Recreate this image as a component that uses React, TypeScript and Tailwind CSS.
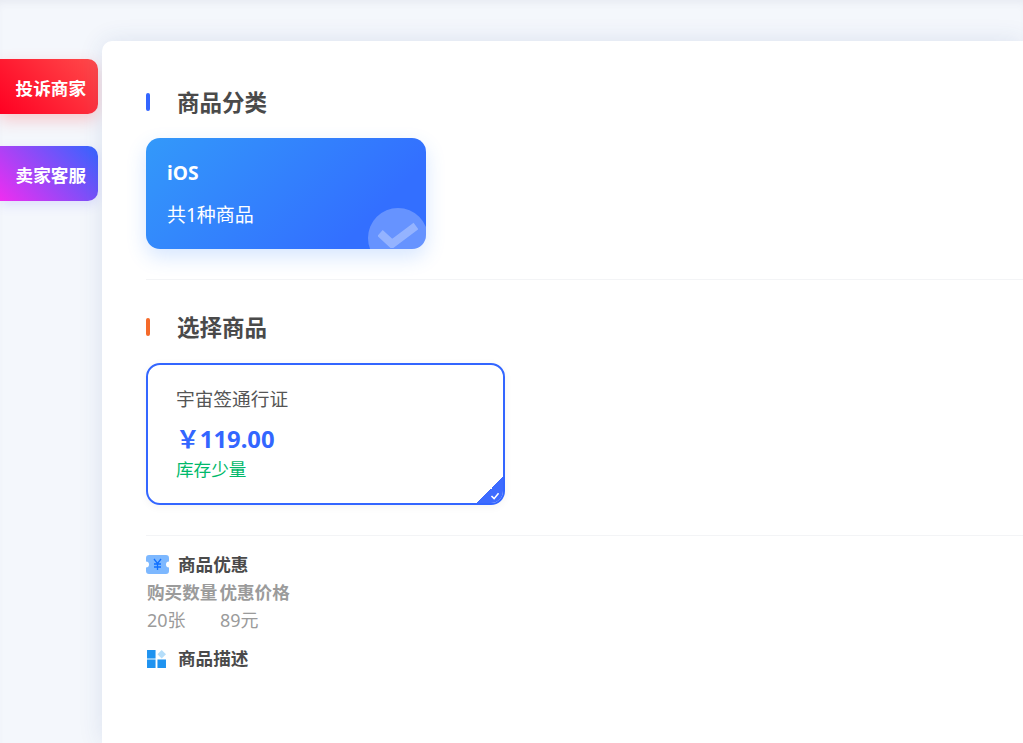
import React from 'react';

const font = 'font-["Noto_Sans","Noto_Sans_CJK_SC",sans-serif]';

// Left side floating buttons
const SideButton = ({ label, className }: { label: string; className: string }) => (
  <div className={`flex h-[55px] w-[98px] items-center justify-end rounded-r-[10px] pt-[3px] pr-3 text-[17.6px] font-bold text-white ${className}`}>
    {label}
  </div>
);

const SectionTitle = ({ label, barColor }: { label: string; barColor: string }) => (
  <div className="flex h-[32px] items-center">
    <span className={`h-[18px] w-1 rounded-full ${barColor}`} />
    <h2 className="mt-[1px] ml-[27px] text-[22.5px] leading-[32px] font-bold text-[#4a4a4a]">{label}</h2>
  </div>
);

const TicketIcon = () => (
  <svg width="23" height="19" viewBox="0 0 23 19">
    <path d="M3 0h17a3 3 0 0 1 3 3v3.500a3 3 0 0 0 0 6V16a3 3 0 0 1-3 3H3a3 3 0 0 1-3-3v-3.500a3 3 0 0 0 0-6V3a3 3 0 0 1 3-3z" fill="#7db8ff" />
    <path d="M8 4l3.500 4.500L15 4M11.500 8.500V15M8 9h7M8 12h7" fill="none" stroke="#0f6fff" strokeWidth="1.300" />
  </svg>
);

const GridIcon = () => (
  <svg width="19" height="18" viewBox="0 0 20 19" className="mt-[1px] ml-[1px]">
    <rect x="0" y="0" width="9" height="9" fill="#1f93f0" />
    <rect x="0" y="10" width="9" height="9" fill="#1f93f0" />
    <rect x="11" y="10" width="9" height="9" fill="#1f93f0" />
    <path d="M15.500 0l4.500 4.500L15.500 9 11 4.500z" fill="#b5defa" />
  </svg>
);

const SubTitle = ({ icon, label }: { icon: React.ReactNode; label: string }) => (
  <div className="flex h-[24px] items-center">
    <span className="flex w-[32px] items-center">{icon}</span>
    <span className="text-[17.6px] leading-[24px] font-bold text-[#4a4a4a]">{label}</span>
  </div>
);

export default function App() {
  return (
    <div className={`flex h-[743px] w-[1023px] overflow-hidden bg-[#f4f7fc] shadow-[inset_0_6px_8px_-4px_rgba(60,70,100,0.08)] ${font}`}>
      <div className="flex w-[102px] shrink-0 flex-col gap-8 pt-[59px]">
        <SideButton label="投诉商家" className="bg-[linear-gradient(45deg,#ff0022,#ff4b4b)] shadow-[0_6px_16px_rgba(255,60,60,0.25)]" />
        <SideButton label="卖家客服" className="bg-[linear-gradient(45deg,#f02df0,#3366ff)] shadow-[0_4px_12px_rgba(90,90,255,0.15)]" />
      </div>

      <main className="mt-[41px] flex-1 rounded-tl-[10px] bg-white pt-[45px] pl-[44px] shadow-[0_0_24px_rgba(40,70,140,0.12)]">
        <SectionTitle label="商品分类" barColor="bg-[#3366ff]" />

        <div className="relative mt-[20px] h-[111px] w-[280px] rounded-[14px] shadow-[0_8px_20px_rgba(51,130,255,0.2)]">
          <div className="relative h-full overflow-hidden rounded-[14px] bg-[linear-gradient(135deg,#3399fa,#336fff_78%)] pt-[20px] pl-[21px] text-white">
            <div className="text-[19.2px] leading-[30px] font-bold">iOS</div>
            <div className="mt-[12px] text-[19px] leading-[30px]">共1种商品</div>
            <div className="absolute top-[70px] left-[222px] flex h-[60px] w-[60px] justify-center rounded-full bg-white/25 pt-[12px]">
              <svg width="40" height="28" viewBox="0 0 40 28" className="text-white/30">
                <path d="M2 13l12 11L38 6" fill="none" stroke="currentColor" strokeWidth="8" />
              </svg>
            </div>
          </div>
        </div>

        <div className="mt-[30px] mb-[31px] h-px bg-[#f3f4f6]" />

        <SectionTitle label="选择商品" barColor="bg-[#f56a2a]" />

        <div className="relative mt-[20px] h-[142px] w-[359px] overflow-hidden rounded-[14px] border-2 border-[#3366ff] pt-[19px] pl-[28px] shadow-[0_2px_8px_rgba(0,0,0,0.05)]">
          <div className="text-[18.7px] leading-[30px] text-[#555555]">宇宙签通行证</div>
          <div className="mt-[9px] text-[23.8px] leading-[32px] font-bold text-[#3366ff]">￥119.00</div>
          <div className="mt-[2px] text-[17.6px] leading-[24px] text-[#00b96b]">库存少量</div>
          <div className="absolute right-0 bottom-0 h-[26px] w-[26px] bg-gradient-to-br from-transparent from-50% to-[#3d6bff] to-50%">
            <svg className="absolute right-[3px] bottom-[3px]" width="10" height="8" viewBox="0 0 11 9">
              <path d="M1.500 4.500l3 3 5-6" fill="none" stroke="#ffffff" strokeWidth="1.800" />
            </svg>
          </div>
        </div>

        <div className="mt-[30px] mb-[16px] h-px bg-[#f3f4f6]" />

        <SubTitle icon={<TicketIcon />} label="商品优惠" />
        <div className="mt-[2px] ml-[1px] flex gap-[2px] text-[17.6px] leading-[28px] font-bold text-[#9b9b9b]">
          <span>购买数量</span>
          <span>优惠价格</span>
        </div>
        <div className="ml-[1px] flex text-[18px] leading-[28px] text-[#9b9b9b]">
          <span className="w-[73px]">20张</span>
          <span>89元</span>
        </div>
        <div className="mt-[12px]">
          <SubTitle icon={<GridIcon />} label="商品描述" />
        </div>
      </main>
    </div>
  );
}
